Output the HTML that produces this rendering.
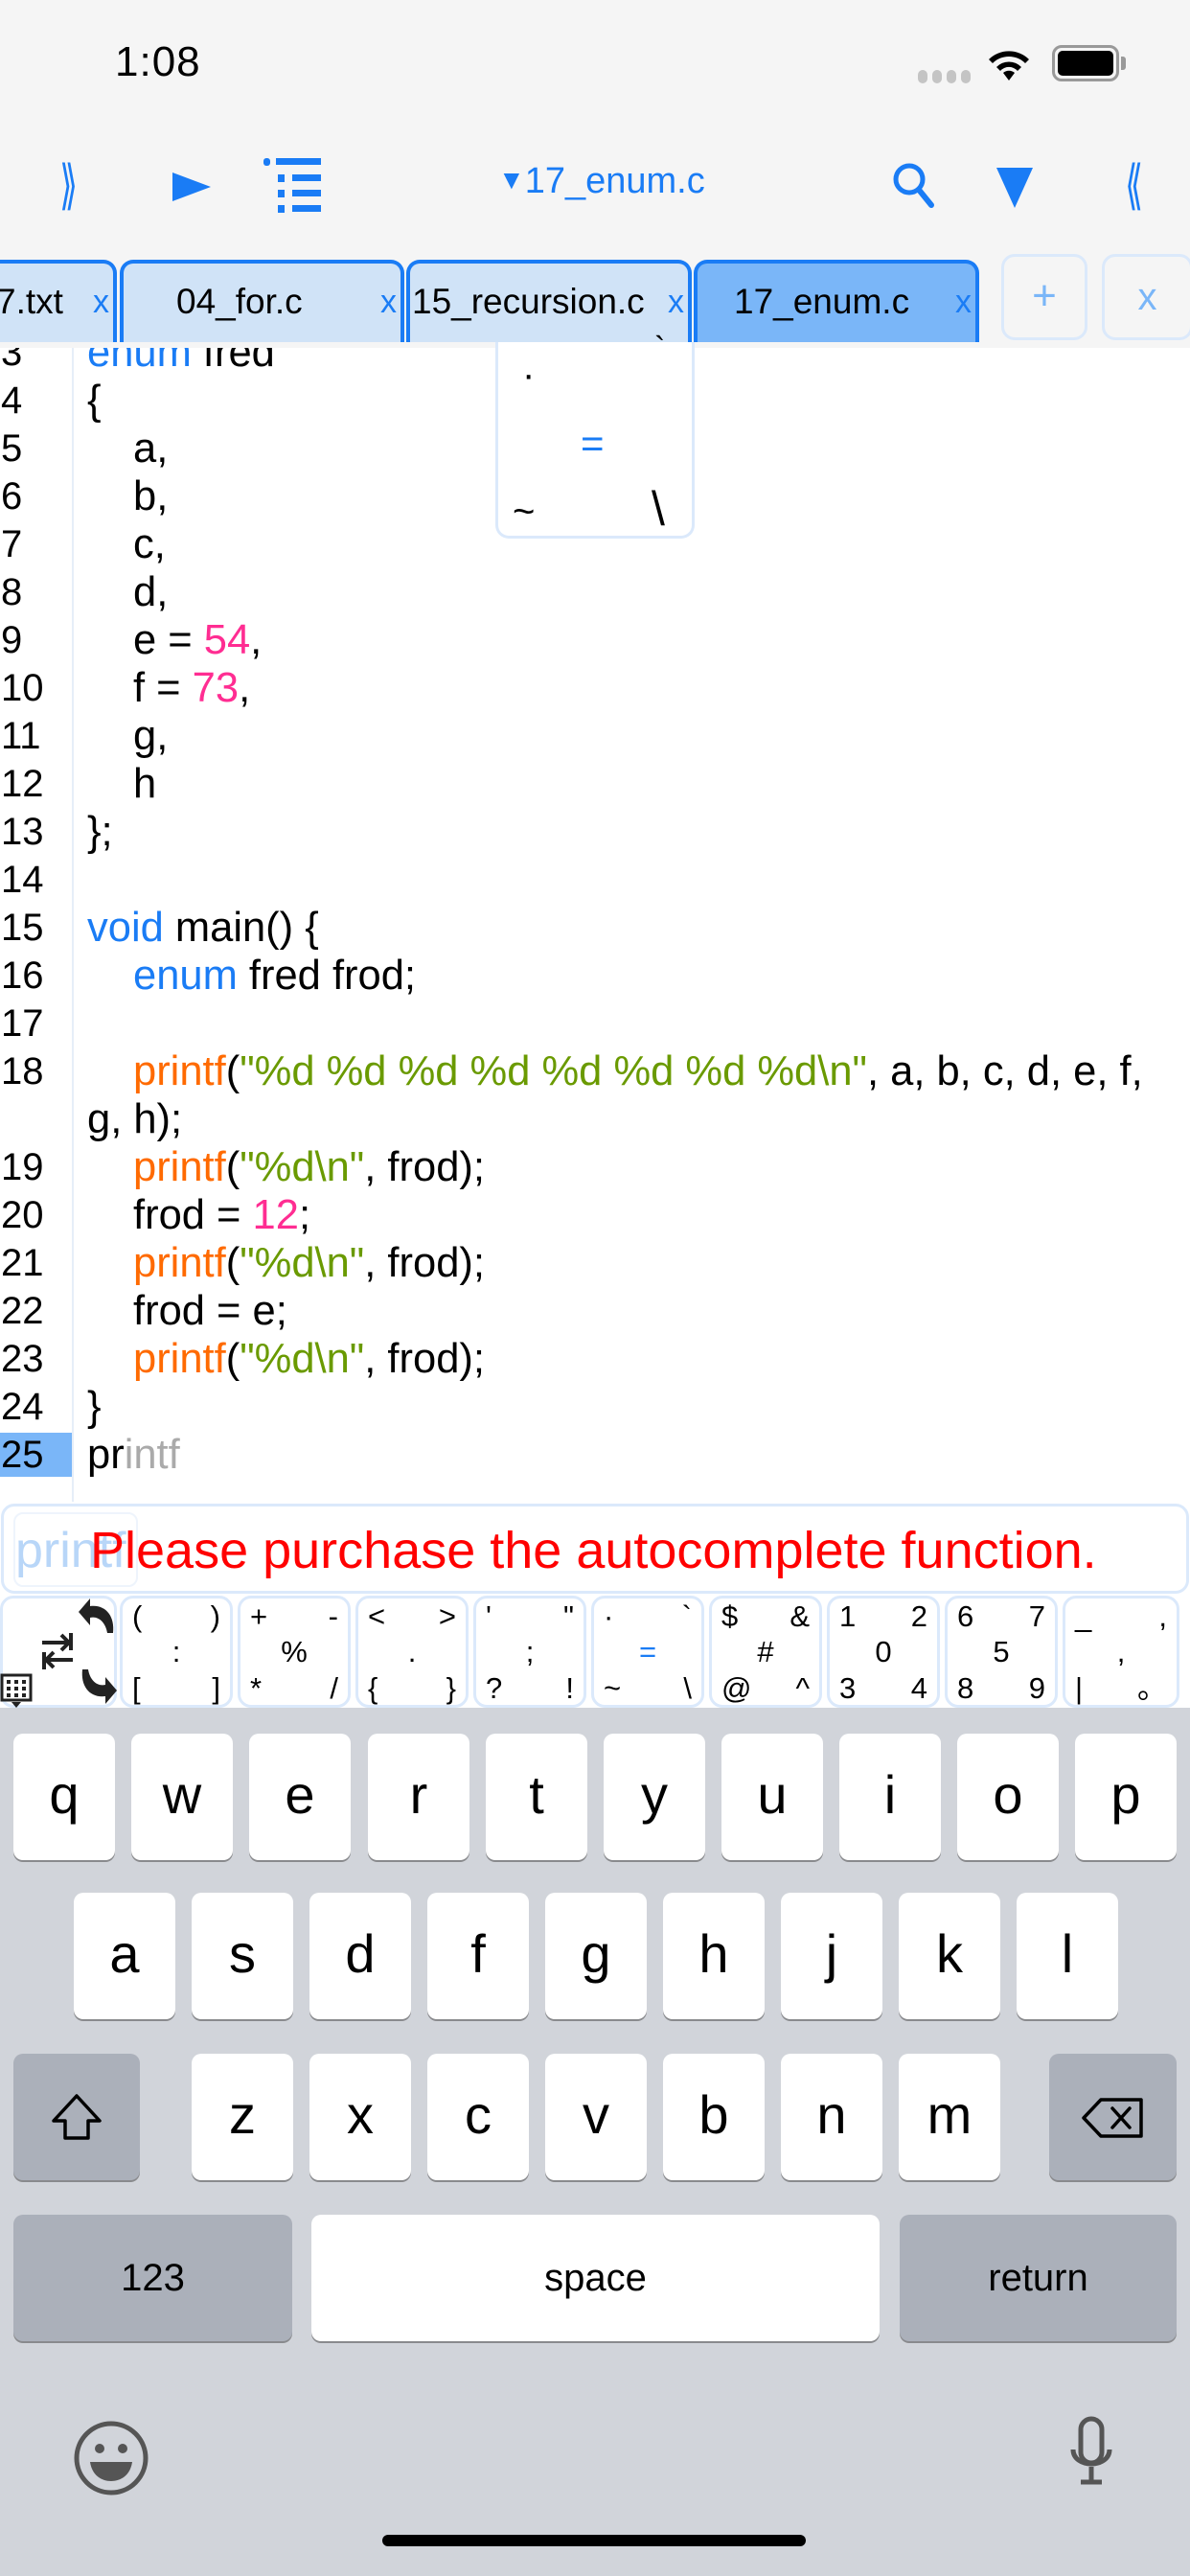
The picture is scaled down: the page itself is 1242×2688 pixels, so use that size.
<!DOCTYPE html>
<html><head><meta charset="utf-8">
<style>
*{margin:0;padding:0;box-sizing:border-box}
body{width:1242px;height:2688px;position:relative;overflow:hidden;background:#fff;font-family:"Liberation Sans","Noto Sans CJK SC",sans-serif;color:#000}
.a{position:absolute}
.blue{color:#1a7cf5}
.num{color:#ff2d92}
.fn{color:#ff6a00}
.str{color:#6a9a00}
.ln{position:absolute;left:0;width:75px;font-size:40px;height:50px;line-height:50px;padding-left:1px}
.cd{position:absolute;left:91px;font-size:43.5px;height:50px;line-height:50px;white-space:pre}
.cd.i{left:139px}
.tab{position:absolute;top:271px;height:86px;background:#d0e3f7;border:4px solid #1a7cf5;border-bottom:none;border-radius:14px 14px 0 0;font-size:37px;line-height:80px;white-space:nowrap}
.tab .x{position:absolute;right:4px;top:0;color:#1a7cf5;font-size:34px}
.sk{position:absolute;top:1665px;width:118px;height:117px;border:3px solid #dbe9fb;border-radius:14px;background:#fff;font-size:31px}
.sk span{position:absolute;line-height:32px}
.tl{left:10px;top:3px}.tr{right:10px;top:3px}.md{left:0;right:0;text-align:center;top:40px}.bl{left:10px;top:78px}.br{right:10px;top:78px}
.key{position:absolute;width:106px;height:132px;background:#fff;border-radius:10px;box-shadow:0 2px 0 #898a8d;font-size:56px;text-align:center;line-height:128px}
.gk{position:absolute;background:#abb0ba;border-radius:10px;box-shadow:0 2px 0 #898a8d;font-size:40px;text-align:center;line-height:132px;height:132px}
</style></head><body>
<div class="a" style="left:0;top:0;width:1242px;height:357px;background:#f5f5f5"></div>
<div class="a" style="left:120px;top:40px;font-size:44px;letter-spacing:1px">1:08</div>
<div class="a" style="left:958px;top:73px;width:56px;height:14px;display:flex;gap:5px"><i style="width:10px;height:14px;background:#c4c4c4;border-radius:5px"></i><i style="width:10px;height:14px;background:#c4c4c4;border-radius:5px"></i><i style="width:10px;height:14px;background:#c4c4c4;border-radius:5px"></i><i style="width:10px;height:14px;background:#c4c4c4;border-radius:5px"></i></div>
<svg class="a" style="left:1028px;top:46px" width="50" height="40" viewBox="0 0 50 40"><path d="M25 38 L19 30 A9 9 0 0 1 31 30 Z" fill="#000"/><path d="M12 24 A18 18 0 0 1 38 24 L34 28 A12 12 0 0 0 16 28 Z" fill="#000"/><path d="M4 16 A30 30 0 0 1 46 16 L42 20 A24 24 0 0 0 8 20 Z" fill="#000"/></svg>
<div class="a" style="left:1098px;top:47px;width:70px;height:38px;border:3px solid #999;border-radius:10px;padding:3px"><div style="width:100%;height:100%;background:#000;border-radius:5px"></div></div>
<div class="a" style="left:1170px;top:59px;width:5px;height:14px;background:#999;border-radius:0 3px 3px 0"></div>

<div class="a blue" style="left:56px;top:160px;font-size:56px;transform:scaleX(.6)">⟫</div>
<svg class="a" style="left:180px;top:180px" width="40" height="30"><path d="M0 0 L40 15 L0 30 Z" fill="#1a7cf5"/></svg>
<svg class="a" style="left:275px;top:163px" width="65" height="60"><g fill="#1a7cf5"><rect x="0" y="2" width="7" height="8" rx="3"/><rect x="13" y="2" width="47" height="7"/><rect x="15" y="19" width="7" height="8"/><rect x="30" y="19" width="30" height="7"/><rect x="15" y="35" width="7" height="8"/><rect x="30" y="35" width="30" height="7"/><rect x="15" y="51" width="7" height="8"/><rect x="30" y="51" width="30" height="7"/></g></svg>
<div class="a blue" style="left:520px;top:168px;font-size:38px"><span style="font-size:28px;vertical-align:4px">▼</span>17_enum.c</div>
<svg class="a" style="left:930px;top:168px" width="48" height="50"><circle cx="19" cy="19" r="14" fill="none" stroke="#1a7cf5" stroke-width="5"/><path d="M29 30 L42 46" stroke="#1a7cf5" stroke-width="6" stroke-linecap="round"/></svg>
<svg class="a" style="left:1040px;top:175px" width="38" height="42"><path d="M0 0 L38 0 L19 42 Z" fill="#1a7cf5"/></svg>
<div class="a blue" style="left:1168px;top:160px;font-size:56px;transform:scaleX(.6)">⟪</div>

<div class="ln" style="top:343px">3</div><div class="cd" style="top:343px"><span class="blue">enum</span> fred</div>
<div class="ln" style="top:393px">4</div><div class="cd" style="top:393px">{</div>
<div class="ln" style="top:443px">5</div><div class="cd i" style="top:443px">a,</div>
<div class="ln" style="top:493px">6</div><div class="cd i" style="top:493px">b,</div>
<div class="ln" style="top:543px">7</div><div class="cd i" style="top:543px">c,</div>
<div class="ln" style="top:593px">8</div><div class="cd i" style="top:593px">d,</div>
<div class="ln" style="top:643px">9</div><div class="cd i" style="top:643px">e = <span class="num">54</span>,</div>
<div class="ln" style="top:693px">10</div><div class="cd i" style="top:693px">f = <span class="num">73</span>,</div>
<div class="ln" style="top:743px">11</div><div class="cd i" style="top:743px">g,</div>
<div class="ln" style="top:793px">12</div><div class="cd i" style="top:793px">h</div>
<div class="ln" style="top:843px">13</div><div class="cd" style="top:843px">};</div>
<div class="ln" style="top:893px">14</div>
<div class="ln" style="top:943px">15</div><div class="cd" style="top:943px"><span class="blue">void</span> main() {</div>
<div class="ln" style="top:993px">16</div><div class="cd i" style="top:993px"><span class="blue">enum</span> fred frod;</div>
<div class="ln" style="top:1043px">17</div>
<div class="ln" style="top:1093px">18</div><div class="cd i" style="top:1093px"><span class="fn">printf</span>(<span class="str">"%d %d %d %d %d %d %d %d\n"</span>, a, b, c, d, e, f,</div>
<div class="cd" style="top:1143px">g, h);</div>
<div class="ln" style="top:1193px">19</div><div class="cd i" style="top:1193px"><span class="fn">printf</span>(<span class="str">"%d\n"</span>, frod);</div>
<div class="ln" style="top:1243px">20</div><div class="cd i" style="top:1243px">frod = <span class="num">12</span>;</div>
<div class="ln" style="top:1293px">21</div><div class="cd i" style="top:1293px"><span class="fn">printf</span>(<span class="str">"%d\n"</span>, frod);</div>
<div class="ln" style="top:1343px">22</div><div class="cd i" style="top:1343px">frod = e;</div>
<div class="ln" style="top:1393px">23</div><div class="cd i" style="top:1393px"><span class="fn">printf</span>(<span class="str">"%d\n"</span>, frod);</div>
<div class="ln" style="top:1443px">24</div><div class="cd" style="top:1443px">}</div>
<div class="ln" style="top:1495px;background:#7ab6f8;height:46px;line-height:46px">25</div><div class="cd" style="top:1493px">pr<span style="color:#aaa">intf</span></div>
<div class="a" style="left:75px;top:357px;width:2px;height:1210px;background:#e6eef8"></div>

<div class="a" style="left:0;top:357px;width:1242px;height:6px;background:#f5f5f5"></div>
<div class="tab" style="left:-60px;width:182px;padding-left:52px">7.txt<span class="x">x</span></div>
<div class="tab" style="left:125px;width:297px;padding-left:55px">04_for.c<span class="x">x</span></div>
<div class="tab" style="left:424px;width:298px;padding-left:2px">15_recursion.c<span class="x">x</span></div>
<div class="tab" style="left:724px;width:298px;padding-left:38px;background:#7ab6f8">17_enum.c<span class="x">x</span></div>
<div class="a" style="left:1045px;top:265px;width:90px;height:90px;border:3px solid #dbe9fb;border-radius:14px;color:#7ab6f8;font-size:44px;text-align:center;line-height:82px">+</div>
<div class="a" style="left:1150px;top:265px;width:95px;height:90px;border:3px solid #dbe9fb;border-radius:14px;color:#7ab6f8;font-size:40px;text-align:center;line-height:84px">x</div>

<div class="a" style="left:517px;top:357px;width:208px;height:205px;border:3px solid #dbe9fb;border-top:none;border-radius:0 0 14px 14px;background:#fff">
<span class="a" style="left:25px;top:12px;font-size:40px">·</span>
<span class="a" style="left:163px;top:-12px;font-size:34px">`</span>
<span class="a blue" style="left:86px;top:82px;font-size:42px">=</span>
<span class="a" style="left:15px;top:155px;font-size:40px">~</span>
<span class="a" style="left:160px;top:145px;font-size:50px">\</span>
</div>

<div class="a" style="left:1px;top:1569px;width:1240px;height:94px;border:3px solid #dbe9fb;border-radius:14px;background:#fff"></div>
<div class="a" style="left:14px;top:1578px;width:130px;height:78px;border:2px solid #eef4fc;border-radius:10px;color:#b8d6f8;font-size:52px;line-height:76px">printf</div>
<div class="a" style="left:94px;top:1588px;color:#ff0000;font-size:54px;line-height:60px">Please purchase the autocomplete function.</div>

<div class="a" style="left:0;top:1665px;width:122px;height:117px;border:3px solid #dbe9fb;border-radius:14px;background:#fff"></div>
<svg class="a" style="left:80px;top:1668px" width="44" height="40"><path d="M6 36 C4 18 14 6 30 8 L30 0 L42 14 L30 28 L30 20 C22 18 14 24 12 36 Z" fill="#222" transform="translate(44,0) scale(-1,1)"/></svg>
<svg class="a" style="left:80px;top:1738px" width="44" height="40"><path d="M6 4 C4 22 14 34 30 32 L30 40 L42 26 L30 12 L30 20 C22 22 14 16 12 4 Z" fill="#222"/></svg>
<svg class="a" style="left:40px;top:1700px" width="40" height="44"><path d="M4 14 H32 M24 6 L32 14 L24 22 M34 4 V22 M36 32 H8 M16 24 L8 32 L16 40 M6 24 V42" stroke="#222" stroke-width="4" fill="none"/></svg>
<svg class="a" style="left:0;top:1746px" width="34" height="36"><rect x="2" y="2" width="30" height="26" fill="none" stroke="#222" stroke-width="3"/><g fill="#222"><rect x="7" y="7" width="4" height="4"/><rect x="15" y="7" width="4" height="4"/><rect x="23" y="7" width="4" height="4"/><rect x="7" y="14" width="4" height="4"/><rect x="15" y="14" width="4" height="4"/><rect x="23" y="14" width="4" height="4"/><rect x="7" y="21" width="4" height="4"/><rect x="15" y="21" width="4" height="4"/><rect x="23" y="21" width="4" height="4"/><path d="M12 30 L22 30 L17 36Z"/></g></svg>

<div class="sk" style="left:125px"><span class="tl">(</span><span class="tr">)</span><span class="md">:</span><span class="bl">[</span><span class="br">]</span></div>
<div class="sk" style="left:248px"><span class="tl">+</span><span class="tr">-</span><span class="md">%</span><span class="bl">*</span><span class="br">/</span></div>
<div class="sk" style="left:371px"><span class="tl">&lt;</span><span class="tr">&gt;</span><span class="md">.</span><span class="bl">{</span><span class="br">}</span></div>
<div class="sk" style="left:494px"><span class="tl">'</span><span class="tr">"</span><span class="md">;</span><span class="bl">?</span><span class="br">!</span></div>
<div class="sk" style="left:617px"><span class="tl">·</span><span class="tr">`</span><span class="md blue">=</span><span class="bl">~</span><span class="br">\</span></div>
<div class="sk" style="left:740px"><span class="tl">$</span><span class="tr">&amp;</span><span class="md">#</span><span class="bl">@</span><span class="br">^</span></div>
<div class="sk" style="left:863px"><span class="tl">1</span><span class="tr">2</span><span class="md">0</span><span class="bl">3</span><span class="br">4</span></div>
<div class="sk" style="left:986px"><span class="tl">6</span><span class="tr">7</span><span class="md">5</span><span class="bl">8</span><span class="br">9</span></div>
<div class="sk" style="left:1109px;width:122px"><span class="tl">_</span><span class="tr">,</span><span class="md">,</span><span class="bl">|</span><span class="br">。</span></div>

<div class="a" style="left:0;top:1782px;width:1242px;height:906px;background:#d1d4da"></div>
<div class="key" style="left:14px;top:1809px">q</div>
<div class="key" style="left:137px;top:1809px">w</div>
<div class="key" style="left:260px;top:1809px">e</div>
<div class="key" style="left:384px;top:1809px">r</div>
<div class="key" style="left:507px;top:1809px">t</div>
<div class="key" style="left:630px;top:1809px">y</div>
<div class="key" style="left:753px;top:1809px">u</div>
<div class="key" style="left:876px;top:1809px">i</div>
<div class="key" style="left:999px;top:1809px">o</div>
<div class="key" style="left:1122px;top:1809px">p</div>
<div class="key" style="left:77px;top:1975px">a</div>
<div class="key" style="left:200px;top:1975px">s</div>
<div class="key" style="left:323px;top:1975px">d</div>
<div class="key" style="left:446px;top:1975px">f</div>
<div class="key" style="left:569px;top:1975px">g</div>
<div class="key" style="left:692px;top:1975px">h</div>
<div class="key" style="left:815px;top:1975px">j</div>
<div class="key" style="left:938px;top:1975px">k</div>
<div class="key" style="left:1061px;top:1975px">l</div>
<div class="gk" style="left:14px;top:2143px;width:132px"><svg width="60" height="56" style="margin-top:38px"><path d="M30 6 L54 32 H42 V50 H18 V32 H6 Z" fill="none" stroke="#000" stroke-width="3.5" stroke-linejoin="round"/></svg></div>
<div class="key" style="left:200px;top:2143px">z</div>
<div class="key" style="left:323px;top:2143px">x</div>
<div class="key" style="left:446px;top:2143px">c</div>
<div class="key" style="left:569px;top:2143px">v</div>
<div class="key" style="left:692px;top:2143px">b</div>
<div class="key" style="left:815px;top:2143px">n</div>
<div class="key" style="left:938px;top:2143px">m</div>
<div class="gk" style="left:1095px;top:2143px;width:133px"><svg width="70" height="50" style="margin-top:42px"><path d="M22 6 H64 V44 H22 L4 25 Z" fill="none" stroke="#000" stroke-width="3.5" stroke-linejoin="round"/><path d="M34 15 L52 35 M52 15 L34 35" stroke="#000" stroke-width="3.5" stroke-linecap="round"/></svg></div>
<div class="gk" style="left:14px;top:2311px;width:291px">123</div>
<div class="key" style="left:325px;top:2311px;width:593px;font-size:40px;line-height:132px">space</div>
<div class="gk" style="left:939px;top:2311px;width:289px">return</div>
<svg class="a" style="left:76px;top:2525px" width="80" height="80"><circle cx="40" cy="40" r="36" fill="none" stroke="#555" stroke-width="5"/><circle cx="28" cy="30" r="5" fill="#555"/><circle cx="52" cy="30" r="5" fill="#555"/><path d="M18 44 H62 C60 58 50 64 40 64 C30 64 20 58 18 44 Z" fill="#555"/></svg>
<svg class="a" style="left:1114px;top:2520px" width="50" height="90"><rect x="14" y="4" width="22" height="46" rx="11" fill="none" stroke="#555" stroke-width="5"/><path d="M6 36 C6 56 44 56 44 36 M25 54 V70 M14 70 H36" fill="none" stroke="#555" stroke-width="5"/></svg>
<div class="a" style="left:399px;top:2645px;width:442px;height:12px;background:#000;border-radius:6px"></div>
</body></html>
